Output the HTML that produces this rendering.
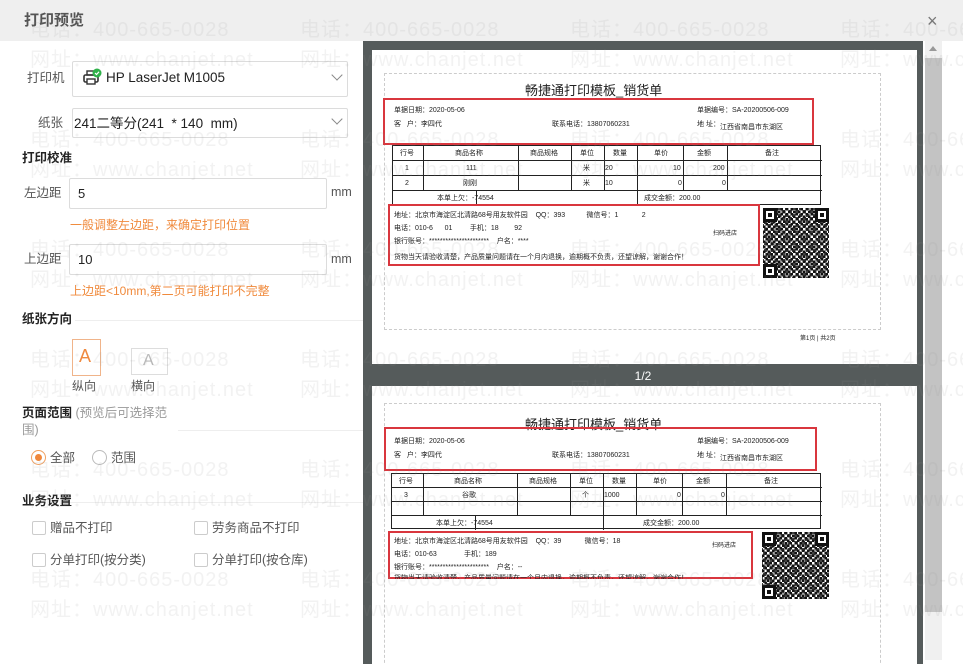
<!DOCTYPE html>
<html><head><meta charset="utf-8">
<style>
*{margin:0;padding:0;box-sizing:border-box}
html,body{width:963px;height:664px;overflow:hidden}
body{background:#fff;font-family:"Liberation Sans","Noto Sans CJK SC",sans-serif;color:#333;position:relative}
.a{position:absolute}
.hdr{left:0;top:0;width:963px;height:41px;background:#efefef}
.lbl{font-size:12.5px;color:#555;line-height:16px}
.box{border:1px solid #dcdcdc;background:#fff;border-radius:2px}
.sec{font-size:12.5px;font-weight:bold;color:#222;line-height:16px}
.tip{font-size:12px;color:#f08a3c;line-height:15px}
.chev{width:8px;height:8px;border-right:1.3px solid #888;border-bottom:1.3px solid #888;transform:rotate(45deg)}
.cb{width:14px;height:14px;border:1px solid #ccc;border-radius:2px;background:#fff}
.frame{left:363px;top:41px;width:560px;height:623px;background:#555b5b}
.page{background:#fff;left:372px;width:545px;overflow:hidden}
.d{position:absolute;font-size:7px;color:#222;white-space:nowrap;line-height:9px;font-family:"Liberation Sans","Noto Sans CJK SC",sans-serif}
.red{position:absolute;border:2px solid #d9363e}
.tb{position:absolute;border:1px solid #222}
.vl{position:absolute;top:0;width:1px;background:#222}
.hl{position:absolute;left:0;height:1px;background:#222}
.qr{position:absolute;background:repeating-conic-gradient(#111 0 25%,#fff 0 50%) 0 0/5px 5px;}
.qr::before{content:"";position:absolute;inset:0;background:repeating-conic-gradient(#111 0 25%,transparent 0 50%) 1px 2px/7px 7px;opacity:.8}
.fd{position:absolute;width:14px;height:14px;border:3px solid #111;background:#fff;box-shadow:inset 0 0 0 2px #fff;z-index:2}
.fd::after{content:"";position:absolute;left:2px;top:2px;width:4px;height:4px;background:#111}
.wm{position:absolute;font-size:20px;line-height:24px;color:rgba(150,150,150,.12);white-space:nowrap;letter-spacing:1px;pointer-events:none;z-index:50}
</style></head><body>
<div class="a hdr"></div>
<div class="a" style="left:24px;top:12px;font-size:15px;font-weight:bold;color:#555;line-height:18px">打印预览</div>
<div class="a" style="left:927px;top:11px;font-size:18px;color:#777;line-height:20px">×</div>

<div class="a lbl" style="left:27px;top:70px">打印机</div>
<div class="a box" style="left:72px;top:61px;width:276px;height:36px"></div>
<svg class="a" style="left:82px;top:68px" width="22" height="20" viewBox="0 0 22 20"><rect x="2" y="7" width="14" height="7" rx="1.5" fill="none" stroke="#333" stroke-width="1.6"/><rect x="5" y="3" width="8" height="4" fill="none" stroke="#333" stroke-width="1.4"/><rect x="5" y="11" width="8" height="5" fill="#fff" stroke="#333" stroke-width="1.4"/><circle cx="15" cy="5" r="4.5" fill="#2fb14a"/><path d="M13 5l1.5 1.5L17 3.8" stroke="#fff" stroke-width="1.2" fill="none"/></svg>
<div class="a" style="left:106px;top:70px;font-size:13.5px;color:#222;line-height:16px">HP LaserJet M1005</div>
<div class="a chev" style="left:333px;top:71px"></div>
<div class="a lbl" style="left:38px;top:115px">纸张</div>
<div class="a box" style="left:72px;top:108px;width:276px;height:30px"></div>
<div class="a" style="left:74px;top:116px;font-size:13.5px;color:#222;line-height:16px">241二等分(241 &nbsp;* 140 &nbsp;mm)</div>
<div class="a chev" style="left:333px;top:115px"></div>
<div class="a sec" style="left:22px;top:150px">打印校准</div>
<div class="a lbl" style="left:24px;top:185px">左边距</div>
<div class="a box" style="left:69px;top:178px;width:258px;height:31px"></div>
<div class="a" style="left:78px;top:186px;font-size:13px;color:#222;line-height:16px">5</div>
<div class="a lbl" style="left:331px;top:184px">mm</div>
<div class="a tip" style="left:70px;top:218px">一般调整左边距，来确定打印位置</div>
<div class="a lbl" style="left:24px;top:251px">上边距</div>
<div class="a box" style="left:69px;top:244px;width:258px;height:31px"></div>
<div class="a" style="left:78px;top:252px;font-size:13px;color:#222;line-height:16px">10</div>
<div class="a lbl" style="left:331px;top:251px">mm</div>
<div class="a tip" style="left:70px;top:284px">上边距&lt;10mm,第二页可能打印不完整</div>
<div class="a sec" style="left:22px;top:311px">纸张方向</div>
<div class="a" style="left:75px;top:320px;width:288px;height:1px;background:#eee"></div>
<div class="a" style="left:72px;top:339px;width:29px;height:37px;border:1px solid #f0b48a"></div>
<div class="a" style="left:79px;top:346px;font-size:18px;color:#ef8a40;line-height:20px">A</div>
<div class="a" style="left:131px;top:348px;width:37px;height:27px;border:1px solid #ddd"></div>
<div class="a" style="left:143px;top:352px;font-size:16px;color:#bbb;line-height:18px">A</div>
<div class="a lbl" style="left:72px;top:378px;font-size:12px">纵向</div>
<div class="a lbl" style="left:131px;top:378px;font-size:12px">横向</div>
<div class="a sec" style="left:22px;top:405px">页面范围 <span style="font-weight:normal;color:#999">(预览后可选择范</span></div>
<div class="a" style="left:22px;top:422px;font-size:12.5px;color:#999;line-height:16px">围)</div>
<div class="a" style="left:178px;top:430px;width:185px;height:1px;background:#eee"></div>
<div class="a" style="left:31px;top:450px;width:15px;height:15px;border:1px solid #f0a060;border-radius:50%"></div>
<div class="a" style="left:35px;top:454px;width:7px;height:7px;background:#f0873a;border-radius:50%"></div>
<div class="a lbl" style="left:50px;top:450px">全部</div>
<div class="a" style="left:92px;top:450px;width:15px;height:15px;border:1px solid #bbb;border-radius:50%"></div>
<div class="a lbl" style="left:111px;top:450px">范围</div>
<div class="a sec" style="left:22px;top:493px">业务设置</div>
<div class="a" style="left:70px;top:502px;width:293px;height:1px;background:#eee"></div>
<div class="a cb" style="left:32px;top:521px"></div><div class="a lbl" style="left:50px;top:520px">赠品不打印</div>
<div class="a cb" style="left:194px;top:521px"></div><div class="a lbl" style="left:212px;top:520px">劳务商品不打印</div>
<div class="a cb" style="left:32px;top:553px"></div><div class="a lbl" style="left:50px;top:552px">分单打印(按分类)</div>
<div class="a cb" style="left:194px;top:553px"></div><div class="a lbl" style="left:212px;top:552px">分单打印(按仓库)</div>

<div class="a frame"></div>
<div class="a" style="left:925px;top:41px;width:17px;height:619px;background:#f0f0f0"></div>
<div class="a" style="left:925px;top:58px;width:17px;height:554px;background:#c3c3c3"></div>
<div class="a" style="left:929px;top:46px;width:0;height:0;border-left:4px solid transparent;border-right:4px solid transparent;border-bottom:5px solid #999"></div>
<div class="a" style="left:363px;top:365px;width:560px;height:20px;text-align:center;color:#fff;font-size:12px;line-height:22px">1/2</div>

<div class="a page" style="top:50px;height:314px">
 <div class="a" style="left:12px;top:23px;width:497px;height:257px;border:1px dashed #ccc"></div>
 <div class="d" style="left:153px;top:33px;font-size:13px;line-height:15px">畅捷通打印模板_销货单</div>
 <div class="red" style="left:11px;top:48px;width:431px;height:47px"></div>
 <div class="d" style="left:22px;top:56px">单据日期：2020-05-06</div>
 <div class="d" style="left:325px;top:56px">单据编号：SA-20200506-009</div>
 <div class="d" style="left:22px;top:70px">客 &nbsp;&nbsp;户：李四代</div>
 <div class="d" style="left:180px;top:70px">联系电话：13807060231</div>
 <div class="d" style="left:325px;top:70px">地 址：<span style="position:relative;top:3px">江西省南昌市东湖区</span></div>
 <div class="tb" style="left:20px;top:95px;width:429px;height:60px">
  <div class="hl" style="top:14px;width:429px"></div><div class="hl" style="top:29px;width:429px"></div><div class="hl" style="top:44px;width:429px"></div>
  <div class="vl" style="left:30px;height:44px"></div><div class="vl" style="left:125px;height:44px"></div><div class="vl" style="left:178px;height:44px"></div>
  <div class="vl" style="left:211px;height:44px"></div><div class="vl" style="left:244px;height:60px"></div><div class="vl" style="left:290px;height:44px"></div>
  <div class="vl" style="left:334px;height:44px"></div><div class="vl" style="left:83px;top:44px;height:16px"></div>
  <div class="d" style="left:7px;top:3px">行号</div><div class="d" style="left:62px;top:3px">商品名称</div><div class="d" style="left:137px;top:3px">商品规格</div><div class="d" style="left:187px;top:3px">单位</div><div class="d" style="left:220px;top:3px">数量</div><div class="d" style="left:261px;top:3px">单价</div><div class="d" style="left:304px;top:3px">金额</div><div class="d" style="left:372px;top:3px">备注</div>
  <div class="d" style="left:12px;top:18px">1</div><div class="d" style="left:73px;top:18px">111</div><div class="d" style="left:190px;top:18px">米</div><div class="d" style="left:212px;top:18px">20</div><div class="d" style="left:280px;top:18px">10</div><div class="d" style="left:320px;top:18px">200</div>
  <div class="d" style="left:12px;top:33px">2</div><div class="d" style="left:70px;top:33px">刚刚</div><div class="d" style="left:190px;top:33px">米</div><div class="d" style="left:212px;top:33px">10</div><div class="d" style="left:285px;top:33px">0</div><div class="d" style="left:329px;top:33px">0</div>
  <div class="d" style="left:44px;top:48px">本单上欠：-74554</div><div class="d" style="left:251px;top:48px">成交金额：200.00</div>
 </div>
 <div class="red" style="left:16px;top:154px;width:372px;height:62px"></div>
 <div class="d" style="left:22px;top:161px">地址：北京市海淀区北清路68号用友软件园 &nbsp;&nbsp;&nbsp;QQ：393 &nbsp;&nbsp;&nbsp;&nbsp;&nbsp;&nbsp;&nbsp;&nbsp;&nbsp;&nbsp;微信号：1 &nbsp;&nbsp;&nbsp;&nbsp;&nbsp;&nbsp;&nbsp;&nbsp;&nbsp;&nbsp;&nbsp;2</div>
 <div class="d" style="left:22px;top:174px">电话：010-6 &nbsp;&nbsp;&nbsp;&nbsp;&nbsp;01 &nbsp;&nbsp;&nbsp;&nbsp;&nbsp;&nbsp;&nbsp;&nbsp;手机：18 &nbsp;&nbsp;&nbsp;&nbsp;&nbsp;&nbsp;&nbsp;92</div>
 <div class="d" style="left:22px;top:187px">银行账号：********************** &nbsp;&nbsp;&nbsp;户名：****</div>
 <div class="d" style="left:22px;top:203px">货物当天请验收清楚，产品质量问题请在一个月内退换，逾期概不负责，还望谅解，谢谢合作！</div>
 <div class="d" style="left:341px;top:180px;font-size:6px">扫码进店</div>
 <div class="qr" style="left:391px;top:158px;width:66px;height:70px"><div class="fd" style="left:0;top:0"></div><div class="fd" style="right:0;top:0"></div><div class="fd" style="left:0;bottom:0"></div></div>
 <div class="d" style="left:428px;top:285px;font-size:6px">第1页 | 共2页</div>
</div>

<div class="a page" style="top:386px;height:278px">
 <div class="a" style="left:12px;top:17px;width:497px;height:270px;border:1px dashed #ccc"></div>
 <div class="d" style="left:153px;top:31px;font-size:13px;line-height:15px">畅捷通打印模板_销货单</div>
 <div class="red" style="left:12px;top:41px;width:433px;height:44px"></div>
 <div class="d" style="left:22px;top:51px">单据日期：2020-05-06</div>
 <div class="d" style="left:325px;top:51px">单据编号：SA-20200506-009</div>
 <div class="d" style="left:22px;top:65px">客 &nbsp;&nbsp;户：李四代</div>
 <div class="d" style="left:180px;top:65px">联系电话：13807060231</div>
 <div class="d" style="left:325px;top:65px">地 址：<span style="position:relative;top:3px">江西省南昌市东湖区</span></div>
 <div class="tb" style="left:19px;top:87px;width:430px;height:56px">
  <div class="hl" style="top:13px;width:430px"></div><div class="hl" style="top:27px;width:430px"></div><div class="hl" style="top:41px;width:430px"></div>
  <div class="vl" style="left:31px;height:41px"></div><div class="vl" style="left:125px;height:41px"></div><div class="vl" style="left:178px;height:41px"></div>
  <div class="vl" style="left:211px;height:56px"></div><div class="vl" style="left:244px;height:41px"></div><div class="vl" style="left:290px;height:41px"></div>
  <div class="vl" style="left:334px;height:41px"></div><div class="vl" style="left:83px;top:41px;height:15px"></div>
  <div class="d" style="left:7px;top:3px">行号</div><div class="d" style="left:62px;top:3px">商品名称</div><div class="d" style="left:137px;top:3px">商品规格</div><div class="d" style="left:187px;top:3px">单位</div><div class="d" style="left:220px;top:3px">数量</div><div class="d" style="left:261px;top:3px">单价</div><div class="d" style="left:304px;top:3px">金额</div><div class="d" style="left:372px;top:3px">备注</div>
  <div class="d" style="left:12px;top:17px">3</div><div class="d" style="left:70px;top:17px">谷歌</div><div class="d" style="left:190px;top:17px">个</div><div class="d" style="left:212px;top:17px">1000</div><div class="d" style="left:285px;top:17px">0</div><div class="d" style="left:329px;top:17px">0</div>
  <div class="d" style="left:44px;top:45px">本单上欠：-74554</div><div class="d" style="left:251px;top:45px">成交金额：200.00</div>
 </div>
 <div class="red" style="left:16px;top:145px;width:365px;height:48px"></div>
 <div class="d" style="left:22px;top:151px">地址：北京市海淀区北清路68号用友软件园 &nbsp;&nbsp;&nbsp;QQ：39 &nbsp;&nbsp;&nbsp;&nbsp;&nbsp;&nbsp;&nbsp;&nbsp;&nbsp;&nbsp;&nbsp;微信号：18</div>
 <div class="d" style="left:22px;top:164px">电话：010-63 &nbsp;&nbsp;&nbsp;&nbsp;&nbsp;&nbsp;&nbsp;&nbsp;&nbsp;&nbsp;&nbsp;&nbsp;&nbsp;手机：189</div>
 <div class="d" style="left:22px;top:177px">银行账号：********************** &nbsp;&nbsp;&nbsp;户名：--</div>
 <div class="d" style="left:22px;top:188px;height:5px;overflow:hidden">货物当天请验收清楚，产品质量问题请在一个月内退换，逾期概不负责，还望谅解，谢谢合作！</div>
 <div class="d" style="left:340px;top:156px;font-size:6px">扫码进店</div>
 <div class="qr" style="left:390px;top:146px;width:67px;height:67px"><div class="fd" style="left:0;top:0"></div><div class="fd" style="right:0;top:0"></div><div class="fd" style="left:0;bottom:0"></div></div>
</div>

<div class="wm" style="left:30px;top:18px">电话：400-665-0028</div><div class="wm" style="left:30px;top:48px">网址：www.chanjet.net</div>
<div class="wm" style="left:300px;top:18px">电话：400-665-0028</div><div class="wm" style="left:300px;top:48px">网址：www.chanjet.net</div>
<div class="wm" style="left:570px;top:18px">电话：400-665-0028</div><div class="wm" style="left:570px;top:48px">网址：www.chanjet.net</div>
<div class="wm" style="left:840px;top:18px">电话：400-665-0028</div><div class="wm" style="left:840px;top:48px">网址：www.chanjet.net</div>
<div class="wm" style="left:30px;top:128px">电话：400-665-0028</div><div class="wm" style="left:30px;top:158px">网址：www.chanjet.net</div>
<div class="wm" style="left:300px;top:128px">电话：400-665-0028</div><div class="wm" style="left:300px;top:158px">网址：www.chanjet.net</div>
<div class="wm" style="left:570px;top:128px">电话：400-665-0028</div><div class="wm" style="left:570px;top:158px">网址：www.chanjet.net</div>
<div class="wm" style="left:840px;top:128px">电话：400-665-0028</div><div class="wm" style="left:840px;top:158px">网址：www.chanjet.net</div>
<div class="wm" style="left:30px;top:238px">电话：400-665-0028</div><div class="wm" style="left:30px;top:268px">网址：www.chanjet.net</div>
<div class="wm" style="left:300px;top:238px">电话：400-665-0028</div><div class="wm" style="left:300px;top:268px">网址：www.chanjet.net</div>
<div class="wm" style="left:570px;top:238px">电话：400-665-0028</div><div class="wm" style="left:570px;top:268px">网址：www.chanjet.net</div>
<div class="wm" style="left:840px;top:238px">电话：400-665-0028</div><div class="wm" style="left:840px;top:268px">网址：www.chanjet.net</div>
<div class="wm" style="left:30px;top:348px">电话：400-665-0028</div><div class="wm" style="left:30px;top:378px">网址：www.chanjet.net</div>
<div class="wm" style="left:300px;top:348px">电话：400-665-0028</div><div class="wm" style="left:300px;top:378px">网址：www.chanjet.net</div>
<div class="wm" style="left:570px;top:348px">电话：400-665-0028</div><div class="wm" style="left:570px;top:378px">网址：www.chanjet.net</div>
<div class="wm" style="left:840px;top:348px">电话：400-665-0028</div><div class="wm" style="left:840px;top:378px">网址：www.chanjet.net</div>
<div class="wm" style="left:30px;top:458px">电话：400-665-0028</div><div class="wm" style="left:30px;top:488px">网址：www.chanjet.net</div>
<div class="wm" style="left:300px;top:458px">电话：400-665-0028</div><div class="wm" style="left:300px;top:488px">网址：www.chanjet.net</div>
<div class="wm" style="left:570px;top:458px">电话：400-665-0028</div><div class="wm" style="left:570px;top:488px">网址：www.chanjet.net</div>
<div class="wm" style="left:840px;top:458px">电话：400-665-0028</div><div class="wm" style="left:840px;top:488px">网址：www.chanjet.net</div>
<div class="wm" style="left:30px;top:568px">电话：400-665-0028</div><div class="wm" style="left:30px;top:598px">网址：www.chanjet.net</div>
<div class="wm" style="left:300px;top:568px">电话：400-665-0028</div><div class="wm" style="left:300px;top:598px">网址：www.chanjet.net</div>
<div class="wm" style="left:570px;top:568px">电话：400-665-0028</div><div class="wm" style="left:570px;top:598px">网址：www.chanjet.net</div>
<div class="wm" style="left:840px;top:568px">电话：400-665-0028</div><div class="wm" style="left:840px;top:598px">网址：www.chanjet.net</div>
</body></html>
